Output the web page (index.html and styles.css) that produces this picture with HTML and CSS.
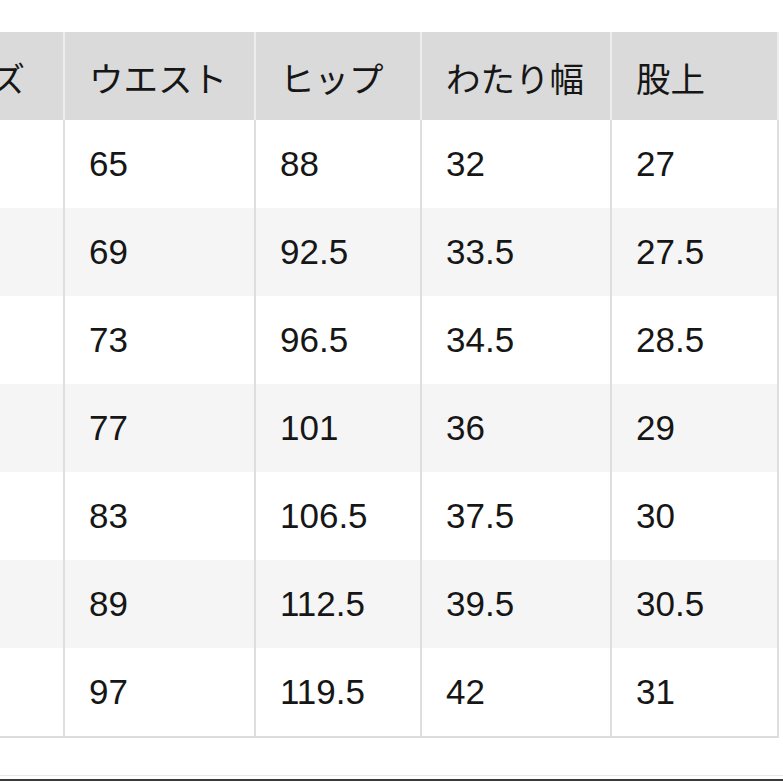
FILE: index.html
```html
<!DOCTYPE html>
<html lang="ja">
<head>
<meta charset="utf-8">
<title>サイズ表</title>
<link rel="stylesheet" href="styles.css">
</head>
<body>
<div class="page">
  <div class="table">
    <div class="cell head first">ズ</div>
    <div class="cell head">ウエスト</div>
    <div class="cell head">ヒップ</div>
    <div class="cell head">わたり幅</div>
    <div class="cell head">股上</div>

    <div class="cell"></div><div class="cell">65</div><div class="cell">88</div><div class="cell">32</div><div class="cell">27</div>
    <div class="cell alt"></div><div class="cell alt">69</div><div class="cell alt">92.5</div><div class="cell alt">33.5</div><div class="cell alt">27.5</div>
    <div class="cell"></div><div class="cell">73</div><div class="cell">96.5</div><div class="cell">34.5</div><div class="cell">28.5</div>
    <div class="cell alt"></div><div class="cell alt">77</div><div class="cell alt">101</div><div class="cell alt">36</div><div class="cell alt">29</div>
    <div class="cell"></div><div class="cell">83</div><div class="cell">106.5</div><div class="cell">37.5</div><div class="cell">30</div>
    <div class="cell alt"></div><div class="cell alt">89</div><div class="cell alt">112.5</div><div class="cell alt">39.5</div><div class="cell alt">30.5</div>
    <div class="cell"></div><div class="cell">97</div><div class="cell">119.5</div><div class="cell">42</div><div class="cell">31</div>
  </div>
  <div class="spacer"></div>
  <div class="rule-light"></div>
  <div class="gap"></div>
  <div class="rule-dark"></div>
</div>
</body>
</html>
```

FILE: styles.css
```css
html, body {
  margin: 0;
  padding: 0;
  background: #ffffff;
  overflow: hidden;
}

.page {
  width: 783px;
  height: 783px;
  padding-top: 32px;
  box-sizing: border-box;
  overflow: hidden;
  font-family: "Liberation Sans", "Noto Sans CJK JP", sans-serif;
  color: #161616;
}

.table {
  display: grid;
  grid-template-columns: 65px 191px 166px 190px 167px;
  grid-auto-rows: 88px;
  width: 779px;
  border-bottom: 2px solid #dcdcdc;
}

.cell {
  box-sizing: border-box;
  display: flex;
  align-items: center;
  padding-left: 24px;
  border-right: 2px solid #dedede;
  font-size: 35px;
  white-space: nowrap;
  background: #ffffff;
}

.cell.alt {
  background: #f5f5f5;
}

.cell.head {
  height: 90px;
  background: #dadada;
  border-right-color: #ededed;
  border-bottom: 2px solid #e6e6e6;
  font-size: 34.5px;
  padding-top: 2px;
}

.cell.head.first {
  padding-left: 0;
  justify-content: flex-end;
  padding-right: 38px;
}

.spacer {
  height: 37px;
}

.rule-light {
  height: 1px;
  background: #e8e8e8;
}

.gap {
  height: 3px;
}

.rule-dark {
  height: 2px;
  background: #3a3a3a;
}
```
